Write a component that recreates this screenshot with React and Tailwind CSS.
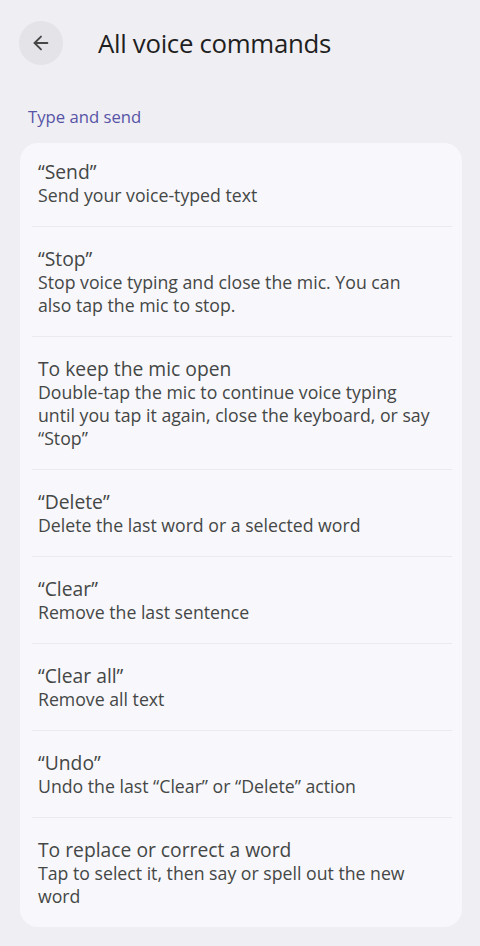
import { ArrowLeft } from "lucide-react";

const commands = [
  { title: "“Send”", desc: "Send your voice-typed text" },
  { title: "“Stop”", desc: "Stop voice typing and close the mic. You can also tap the mic to stop." },
  {
    title: "To keep the mic open",
    desc: "Double-tap the mic to continue voice typing until you tap it again, close the keyboard, or say “Stop”",
  },
  { title: "“Delete”", desc: "Delete the last word or a selected word" },
  { title: "“Clear”", desc: "Remove the last sentence" },
  { title: "“Clear all”", desc: "Remove all text" },
  { title: "“Undo”", desc: "Undo the last “Clear” or “Delete” action" },
  { title: "To replace or correct a word", desc: "Tap to select it, then say or spell out the new word" },
];

const App = () => {
  return (
    <div
      className="min-h-[946px] w-[480px] bg-[#efeef3] text-[#444746]"
      style={{ fontFamily: '"Open Sans", "Noto Sans", sans-serif' }}>
      {/* Top bar */}
      <header className="flex items-center h-[86px] px-[19px]">
        <button className="w-11 h-11 rounded-full bg-[#e4e3e8] flex items-center justify-center text-[#444746]">
          <ArrowLeft size={22} strokeWidth={2} />
        </button>
        <h1 className="ml-[35px] text-[25.8px] text-[#1f1f1f] tracking-[-0.3px]">All voice commands</h1>
      </header>

      <div className="pl-5 pr-[18px]">
        <h2 className="pl-2 pt-[19px] pb-[14px] text-[16.7px] leading-[24px] text-[#5754a6]">Type and send</h2>

        {/* Command list */}
        <div className="bg-[#f8f7fb] rounded-[18px] pl-3 pr-[10px]">
          {commands.map((c, i) => (
            <div
              key={c.title}
              className={`pl-[6px] pr-[22px] pb-[19px] ${i === 0 ? "pt-[17px]" : "pt-5"} ${
                i < commands.length - 1 ? "border-b border-[#ebeaef]" : ""
              }`}>
              <div className="text-[19.3px] leading-[24px] font-medium">{c.title}</div>
              <div className="text-[17.7px] leading-[23px]">{c.desc}</div>
            </div>
          ))}
        </div>
      </div>
    </div>
  );
};

export default App;
